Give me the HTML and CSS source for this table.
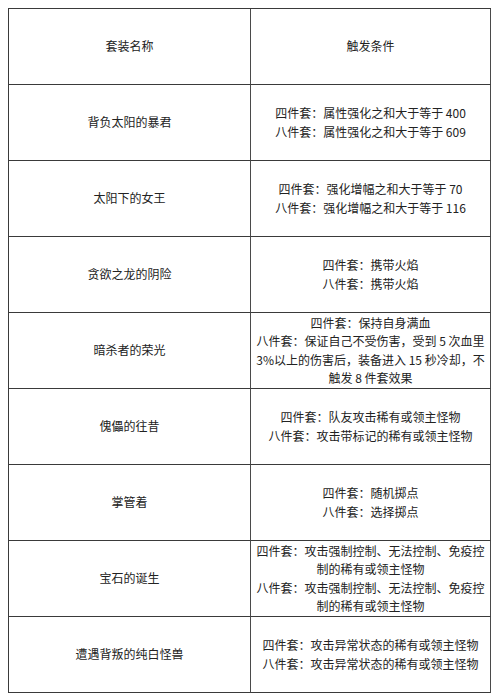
FILE: index.html
```html
<!DOCTYPE html>
<html lang="zh-CN">
<head>
<meta charset="utf-8">
<title>套装</title>
<link rel="stylesheet" href="styles.css">
</head>
<body>
<div class="grid">
  <div class="cell">套装名称</div>
  <div class="cell">触发条件</div>

  <div class="cell">背负太阳的暴君</div>
  <div class="cell"><span>四件套：属性强化之和大于等于 400</span><span>八件套：属性强化之和大于等于 609</span></div>

  <div class="cell">太阳下的女王</div>
  <div class="cell"><span>四件套：强化增幅之和大于等于 70</span><span>八件套：强化增幅之和大于等于 116</span></div>

  <div class="cell">贪欲之龙的阴险</div>
  <div class="cell"><span>四件套：携带火焰</span><span>八件套：携带火焰</span></div>

  <div class="cell">暗杀者的荣光</div>
  <div class="cell"><span>四件套：保持自身满血</span><span>八件套：保证自己不受伤害，受到 5 次血里</span><span>3%以上的伤害后，装备进入 15 秒冷却，不</span><span>触发 8 件套效果</span></div>

  <div class="cell">傀儡的往昔</div>
  <div class="cell"><span>四件套：队友攻击稀有或领主怪物</span><span>八件套：攻击带标记的稀有或领主怪物</span></div>

  <div class="cell">掌管着</div>
  <div class="cell"><span>四件套：随机掷点</span><span>八件套：选择掷点</span></div>

  <div class="cell">宝石的诞生</div>
  <div class="cell"><span>四件套：攻击强制控制、无法控制、免疫控</span><span>制的稀有或领主怪物</span><span>八件套：攻击强制控制、无法控制、免疫控</span><span>制的稀有或领主怪物</span></div>

  <div class="cell">遭遇背叛的纯白怪兽</div>
  <div class="cell"><span>四件套：攻击异常状态的稀有或领主怪物</span><span>八件套：攻击异常状态的稀有或领主怪物</span></div>
</div>
</body>
</html>
```

FILE: styles.css
```css
html, body {
  background: #ffffff;
}
body {
  margin: 8px;
  font-family: "Noto Sans CJK SC", "Noto Sans", sans-serif;
  font-size: 12px;
  color: #222222;
}
.grid {
  display: grid;
  grid-template-columns: 242px 240px;
  grid-auto-rows: 76px;
  width: 483px;
  box-sizing: border-box;
  border-left: 1px solid #3a3a3a;
  border-top: 1px solid #3a3a3a;
}
.cell {
  box-sizing: border-box;
  border-right: 1px solid #4a4a4a;
  border-bottom: 1px solid #3a3a3a;
  display: flex;
  flex-direction: column;
  align-items: center;
  justify-content: center;
  text-align: center;
  line-height: 18.5px;
}
.cell span {
  display: block;
  white-space: nowrap;
}
```
